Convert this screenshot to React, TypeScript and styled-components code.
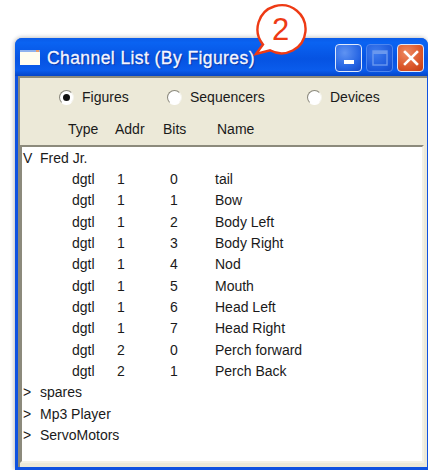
import React from 'react';
import styled, {createGlobalStyle} from 'styled-components';

const GlobalStyle = createGlobalStyle`
  html, body {
    margin: 0;
    padding: 0;
    background: #fff;
    width: 428px;
    height: 470px;
    overflow: hidden;
  }
`;

const Page = styled.div`
  position: relative;
  box-sizing: border-box;
  width: 428px;
  height: 470px;
  padding: 38px 0 0 15px;
  font-family: 'Liberation Sans', Arial, sans-serif;
  color: #1a1a1a;
`;

const Window = styled.div`
  display: flex;
  flex-direction: column;
  height: 100%;
  background: #0f52e0;
  border-radius: 7px 7px 0 0;
  box-shadow: 0 -1px 5px rgba(0, 0, 0, 0.12), -1px 0 4px rgba(0, 0, 0, 0.18);
`;

const TitleBar = styled.div`
  display: flex;
  align-items: center;
  flex: none;
  box-sizing: border-box;
  height: 38px;
  padding: 1px 4px 0 5px;
  border-radius: 7px 7px 0 0;
  background: linear-gradient(180deg, #0a5be8 0%, #0a63f2 12%, #0653e2 55%, #0a5cec 85%, #0445c8 100%);
`;

const TitleIcon = styled.svg`
  flex: none;
  width: 20px;
  height: 15px;
  margin-right: 7px;
`;

const Title = styled.div`
  flex: 1;
  margin-top: 2px;
  font-size: 17.5px;
  color: #f4f6ff;
  -webkit-text-stroke: 0.3px #f4f6ff;
  text-shadow: 1px 1px 1px #0a2f9c;
  white-space: nowrap;
  letter-spacing: 0.42px;
`;

const Controls = styled.div`
  display: flex;
  gap: 4px;
`;

const ControlButton = styled.div<{$kind: 'min' | 'max' | 'close'}>`
  box-sizing: border-box;
  display: flex;
  align-items: center;
  justify-content: center;
  width: 27px;
  height: 28px;
  border-radius: 4px;
  border: 1px solid ${(p) => (p.$kind === 'max' ? '#4d86ef' : '#dfe9fb')};
  background: ${(p) =>
    p.$kind === 'close'
      ? 'radial-gradient(circle at 35% 30%, #ee8a62 0%, #dc5a2e 55%, #c43a10 100%)'
      : p.$kind === 'max'
      ? 'radial-gradient(circle at 35% 30%, #3f7cee 0%, #1a58dc 70%, #1449c8 100%)'
      : 'radial-gradient(circle at 35% 30%, #5f93f2 0%, #2766e4 60%, #1347c4 100%)'};
`;

const Client = styled.div`
  display: flex;
  flex-direction: column;
  flex: 1;
  min-height: 0;
  margin: 0 1px 3px 3px;
  background: #ece9d8;
  border-top: 2px solid #8c8a7c;
  border-left: 2px solid #8c8a7c;
`;

const RadioRow = styled.div`
  display: flex;
  align-items: center;
  flex: none;
  height: 38px;
  padding-left: 39px;
`;

const RadioItem = styled.label<{$width: number}>`
  display: flex;
  align-items: center;
  gap: 8px;
  width: ${(p) => p.$width}px;
  font-size: 14px;
`;

const RadioDot = styled.span<{$checked?: boolean}>`
  position: relative;
  flex: none;
  box-sizing: border-box;
  width: 15px;
  height: 15px;
  border-radius: 50%;
  background: #fff;
  border: 1px solid;
  border-color: #8a887c #f4f3ec #fff #8a887c;

  &::after {
    content: '';
    display: ${(p) => (p.$checked ? 'block' : 'none')};
    position: absolute;
    left: 3px;
    top: 3px;
    width: 7px;
    height: 7px;
    border-radius: 50%;
    background: #111;
  }
`;

const ColumnHead = styled.div`
  display: flex;
  align-items: center;
  flex: none;
  box-sizing: border-box;
  height: 29px;
  padding-bottom: 3px;
  font-size: 14px;
`;

const HeadCell = styled.span<{$width: number}>`
  flex: none;
  width: ${(p) => p.$width}px;
`;

const Tree = styled.div`
  flex: 1;
  min-height: 0;
  display: flex;
  flex-direction: column;
  margin: 0 3px 4px 0;
  background: #fff;
  border-top: 2px solid #8c8a7c;
  border-left: 2px solid #8c8a7c;
  border-right: 2px solid #f3f1e6;
  border-bottom: 2px solid #f3f1e6;
  font-size: 14px;
`;

const GroupRow = styled.div`
  display: flex;
  align-items: center;
  flex: none;
  height: 21.35px;
`;

const Marker = styled.span`
  flex: none;
  width: 18px;
  padding-left: 1px;
  box-sizing: border-box;
`;

const ChannelRow = styled.div`
  display: flex;
  align-items: center;
  flex: none;
  height: 21.35px;
  padding-left: 50px;
`;

const Cell = styled.span<{$width?: number}>`
  flex: none;
  width: ${(p) => (p.$width ? `${p.$width}px` : 'auto')};
`;

const Badge = styled.svg`
  position: absolute;
  left: 250px;
  top: 3px;
  width: 58px;
  height: 56px;
`;

const BadgeNumber = styled.span`
  position: absolute;
  left: 272px;
  top: 15px;
  font-size: 31px;
  line-height: 30px;
  color: #ee3a14;
`;

const channels = [
  {addr: 1, bit: 0, name: 'tail'},
  {addr: 1, bit: 1, name: 'Bow'},
  {addr: 1, bit: 2, name: 'Body Left'},
  {addr: 1, bit: 3, name: 'Body Right'},
  {addr: 1, bit: 4, name: 'Nod'},
  {addr: 1, bit: 5, name: 'Mouth'},
  {addr: 1, bit: 6, name: 'Head Left'},
  {addr: 1, bit: 7, name: 'Head Right'},
  {addr: 2, bit: 0, name: 'Perch forward'},
  {addr: 2, bit: 1, name: 'Perch Back'},
];

const collapsedGroups = ['spares', 'Mp3 Player', 'ServoMotors'];

export default function App() {
  return (
    <Page>
      <GlobalStyle />
      <Window>
        <TitleBar>
          <TitleIcon viewBox="0 0 20 15">
            <rect x="0" y="0" width="20" height="15" fill="#fffdf0" />
            <rect x="0" y="0" width="20" height="2" fill="#8fb2ee" />
            <rect x="16" y="0" width="3" height="2" fill="#e8a070" />
          </TitleIcon>
          <Title>Channel List (By Figures)</Title>
          <Controls>
            <ControlButton $kind="min">
              <svg width="12" height="12" viewBox="0 0 12 12">
                <rect x="1" y="8" width="10" height="4" fill="#fff" />
              </svg>
            </ControlButton>
            <ControlButton $kind="max">
              <svg width="16" height="16" viewBox="0 0 16 16">
                <rect x="1" y="1" width="14" height="14" fill="none" stroke="#6a98ee" strokeWidth="1.4" />
                <rect x="1" y="1" width="14" height="3" fill="#6a98ee" />
              </svg>
            </ControlButton>
            <ControlButton $kind="close">
              <svg width="16" height="16" viewBox="0 0 16 16">
                <path d="M2 2 L14 14 M14 2 L2 14" stroke="#fff" strokeWidth="2.6" strokeLinecap="square" />
              </svg>
            </ControlButton>
          </Controls>
        </TitleBar>
        <Client>
          <RadioRow>
            <RadioItem $width={108}>
              <RadioDot $checked />
              Figures
            </RadioItem>
            <RadioItem $width={140}>
              <RadioDot />
              Sequencers
            </RadioItem>
            <RadioItem $width={90}>
              <RadioDot />
              Devices
            </RadioItem>
          </RadioRow>
          <ColumnHead>
            <HeadCell $width={48} />
            <HeadCell $width={47}>Type</HeadCell>
            <HeadCell $width={48}>Addr</HeadCell>
            <HeadCell $width={54}>Bits</HeadCell>
            <HeadCell $width={50}>Name</HeadCell>
          </ColumnHead>
          <Tree>
            <GroupRow>
              <Marker>V</Marker>
              Fred Jr.
            </GroupRow>
            {channels.map((channel) => (
              <ChannelRow key={channel.name}>
                <Cell $width={45}>dgtl</Cell>
                <Cell $width={53}>{channel.addr}</Cell>
                <Cell $width={45}>{channel.bit}</Cell>
                <Cell>{channel.name}</Cell>
              </ChannelRow>
            ))}
            {collapsedGroups.map((group) => (
              <GroupRow key={group}>
                <Marker>&gt;</Marker>
                {group}
              </GroupRow>
            ))}
          </Tree>
        </Client>
      </Window>
      <Badge viewBox="0 0 58 56">
        <path
          d="M6 51 L13 41.5 A24 24 0 1 1 20 47.3 Z"
          fill="#fff"
          stroke="#ee3a14"
          strokeWidth="2.4"
          strokeLinejoin="miter"
        />
      </Badge>
      <BadgeNumber>2</BadgeNumber>
    </Page>
  );
}
